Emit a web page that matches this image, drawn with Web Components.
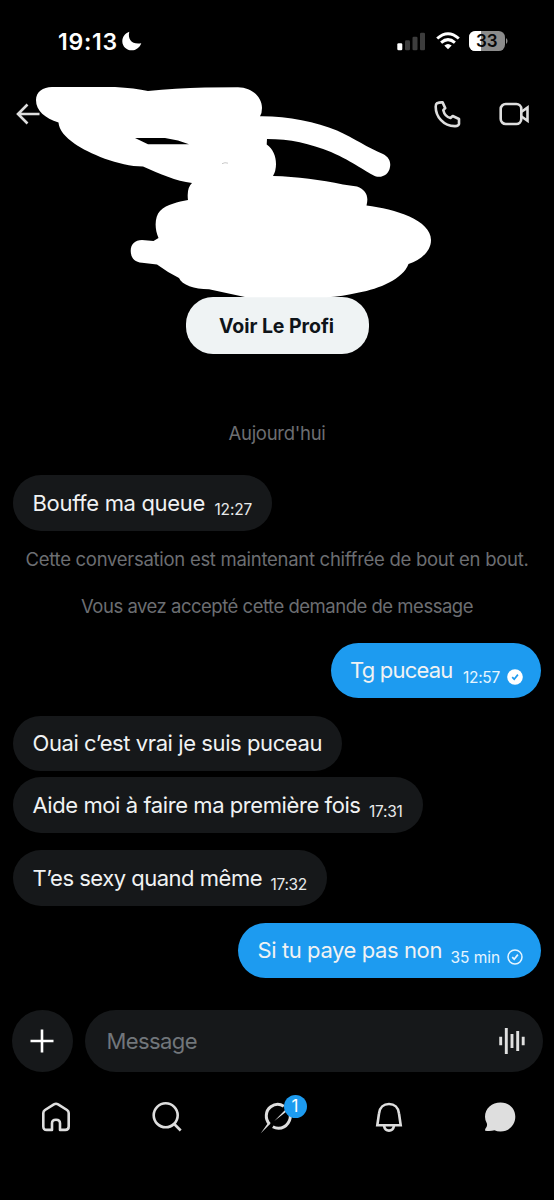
<!DOCTYPE html>
<html lang="fr">
<head>
<meta charset="utf-8">
<title>Conversation</title>
<style>
html,body{margin:0;background:#000;}
body{width:554px;height:1200px;overflow:hidden;font-family:Inter,Roboto,sans-serif;color:#f0f2f3}
</style>
</head>
<body>
<chat-app></chat-app>
<script>
const define=(name,html,after)=>{
  const t=document.createElement('template');t.innerHTML=html;
  customElements.define(name,class extends HTMLElement{
    connectedCallback(){
      if(this.shadowRoot)return;
      this.attachShadow({mode:'open'}).append(t.content.cloneNode(true));
      if(after)after(this,this.shadowRoot);
    }
  });
};

/* One line of text, tracked so that it fills the width given in pixels. */
define('fit-text',`<style>:host{display:block;white-space:pre;overflow:visible}span{display:inline-block}</style><span></span>`,(el,r)=>{
  const s=r.querySelector('span'),w=+el.getAttribute('width');
  s.textContent=el.getAttribute('text');
  el.style.width=w+'px';
  const n=s.getBoundingClientRect().width;
  s.style.letterSpacing=((w-n)/s.textContent.length)+'px';
});

define('status-bar',`<style>
:host{display:flex;height:80px;box-sizing:border-box;padding:0 45px 0 58px;justify-content:space-between;font-family:Inter,sans-serif}
div{display:flex;align-items:center;height:82px}
fit-text{font-size:23px;font-weight:600;color:#fff;padding-top:1px}
.moon{margin-left:4px}
.wifi{margin-left:9px}.bat{position:relative;margin-left:9px;width:40px;height:20px}
.bat b{position:absolute;left:7px;top:0;line-height:20px;font-size:17px;font-weight:600;color:#080808}
svg{display:block}
</style>
<div><fit-text text="19:13" width="60"></fit-text>
<svg class="moon" width="20" height="20" viewBox="0 0 20 20"><path fill="#fff" d="M7.300.700C5.300 8.500 10.500 14 19.300 12.200 17.300 17 13.900 19.300 9.800 19.300 4.500 19.300.300 15.400.300 10.200.300 5.900 3 2.300 7.300.700Z"/></svg></div>
<div>
<svg width="30" height="20" viewBox="0 0 30 20"><rect x=".300" y="12.300" width="5" height="7" rx="1.300" fill="#fff"/><g fill="#3d3d3d"><rect x="8" y="9.300" width="5" height="10" rx="1.300"/><rect x="15.500" y="5.800" width="5" height="13.500" rx="1.300"/><rect x="23" y="1.800" width="5" height="17.500" rx="1.300"/></g></svg>
<svg class="wifi" width="24" height="18" viewBox="0 0 24 18"><g fill="none" stroke="#fff" stroke-width="3"><path d="M1.200 6.500Q12-3.100 22.800 6.500"/><path d="M5.100 10.600Q12 4.600 18.900 10.600"/></g><path fill="#fff" d="M12 17.300 8.300 13.500Q12 10.400 15.700 13.500Z"/></svg>
<div class="bat"><svg width="40" height="20" viewBox="0 0 40 20"><defs><clipPath id="c"><rect width="36" height="20" rx="6.300"/></clipPath></defs><g clip-path="url(#c)"><rect width="36" height="20" fill="#8b8b8b"/><rect width="12" height="20" fill="#fff"/></g><path fill="#8b8b8b" d="M37 7q1.500 1.200 1.500 3t-1.500 3Z"/></svg><b>33</b></div>
</div>`);

define('chat-header',`<style>
:host{display:flex;height:68px;box-sizing:border-box;padding:0 24px 0 16px;align-items:center;justify-content:space-between}
div{display:flex;gap:38.500px;align-items:center}svg{display:block;fill:none;stroke:#dedede;stroke-width:2.600}
</style>
<svg width="26" height="22" viewBox="0 0 26 22"><path d="M11.500 1.500 2 11l9.500 9.500M2 11h21.500"/></svg>
<div>
<svg width="27" height="27" viewBox="0 0 27 27" stroke-linejoin="round"><path d="M3.100 2.200Q5.500 1.200 8.600 1.400L11.200 7.100 9.300 9.200Q10.800 15.500 16.500 17L18.700 15 25 18V23Q24.500 25.300 20.700 25.100C9.500 25.100 1.700 15.700 1.700 5.700Q1.700 3.100 3.100 2.200Z"/></svg>
<svg width="31" height="24" viewBox="0 0 31 24"><rect x="1.700" y="2" width="20.600" height="20" rx="5"/><path d="M22.500 9.800 28.500 5.600V18.700L22.500 14.500"/></svg>
</div>`);

/* White brush strokes that hide the account's name and picture. */
define('brush-mask',`<style>:host{position:absolute;left:0;top:0;width:554px;height:310px;pointer-events:none}svg{display:block}</style>
<svg width="554" height="310" viewBox="0 0 554 310"><path fill="#fff" fill-rule="evenodd" d="M36 100C36 92 43 87 52 87L115 87Q135 88 148 91Q175 88 205 87.500L238 87.300C252 87.500 262 97 262 108Q262 113 260 116.300C287 116 316 122 337 130.500C354 138 368 148 383 154C389 157 391 162 390 167C389 174 383 178 376 176.500C367 173 354 162 331 152C310 143.500 290 139 267 139L266.700 144.500C273 149 276 156 276 164Q276 171 273 176C297 176.500 321 180 343 184.500L357 186.500C366 190 369 196 366.500 205.500C395 209 431 220 431 240C431 252 420 260 408.500 264C403 279 379 289 359 292.500Q342 296.500 327 297.200H246Q228 293.500 209 289.300C194 289 182 285 179 278Q167 272 157 264.500L142 262.800C134 262 130.700 257 130.700 251C130.700 244 135 240 142 240L153.500 241 158.500 238C154 228 155 216 160 211C167 204 178 202 188 200Q186.500 188 192 183C176 181 160 174 143 166.500C119 166.500 88 153 75 144C65 137 59 130 58.500 122.500C45 118 36 111 36 100ZM135 138 148 144.200H189L178 140.500 165 138Z"/><path d="M222 163.700l3-1 3 .5" fill="none" stroke="#bbb" stroke-width=".8"/></svg>`);

define('profile-card',`<style>
:host{display:flex;height:206px;justify-content:center;align-items:flex-end}
button{all:unset;box-sizing:border-box;width:183px;height:57.500px;border-radius:27px;background:#eff3f4;display:flex;justify-content:center;align-items:center;color:#0f1419;font-size:19.500px;font-weight:650}
fit-text{padding-right:1px;padding-top:1px}
</style><button><fit-text text="Voir Le Profi" width="115"></fit-text></button>`);

define('system-line',`<style>:host{display:flex;justify-content:center;height:24px;line-height:24px;font-size:18.500px;color:#6c6e72}</style><slot></slot>`);

define('message-bubble',`<style>
:host{display:flex;box-sizing:border-box;width:fit-content;height:55.500px;align-items:center;border-radius:28px;background:#16181a;margin-left:13px;padding:0 20px 0 19.500px}
:host([mine]){background:#1d9bf0;margin:0 13px 0 auto;padding-right:18px}
.t{font-size:22px;line-height:28px}
.s{font-size:15.500px;line-height:20px;padding-top:14.500px;margin-left:9px;color:#e8eaeb}
:host([mine]) .s{color:#e5f5ff}
svg{display:block;margin:14px 0 0 7px}
</style>`,(el,r)=>{
  const a=k=>el.getAttribute(k);
  const add=(c,text,w)=>{const f=document.createElement('fit-text');f.className=c;f.setAttribute('text',text);f.setAttribute('width',w);r.append(f);return f};
  add('t',a('text'),a('width'));
  if(a('time')){const f=add('s',a('time'),a('time-width'));if(a('gap'))f.style.marginLeft=a('gap')+'px'}
  if(a('state')){
    const read=a('state')==='read',h=document.createElement('template');
    h.innerHTML='<svg width="16" height="16" viewBox="0 0 16 16"><circle cx="8" cy="8" r="'+(read?7.8:7)+'" fill="'+(read?'#fff':'none')+'" stroke="'+(read?'none':'#e5f5ff')+'" stroke-width="1.500"/><path d="M5.200 8.200 7.200 10.200 10.900 5.600" fill="none" stroke="'+(read?'#1d9bf0':'#e5f5ff')+'" stroke-width="1.700"/></svg>';
    r.append(h.content);
  }
});

define('message-list',`<style>
:host{display:flex;flex-direction:column;height:655.500px;box-sizing:border-box;padding-top:67px}
</style>
<system-line><fit-text text="Aujourd'hui" width="97"></fit-text></system-line>
<message-bubble style="margin-top:30px" text="Bouffe ma queue" width="172.500" time="12:27" time-width="37.500" gap="9.500"></message-bubble>
<system-line style="margin-top:16px"><fit-text text="Cette conversation est maintenant chiffrée de bout en bout." width="503"></fit-text></system-line>
<system-line style="margin-top:23px"><fit-text text="Vous avez accepté cette demande de message" width="392"></fit-text></system-line>
<message-bubble mine style="margin-top:25px" text="Tg puceau" width="102.500" time="12:57" time-width="37" gap="10.500" state="read"></message-bubble>
<message-bubble style="margin-top:17.500px" text="Ouai c’est vrai je suis puceau" width="289.500"></message-bubble>
<message-bubble style="margin-top:6px" text="Aide moi à faire ma première fois" width="328" time="17:31" time-width="33.500" gap="8.500"></message-bubble>
<message-bubble style="margin-top:17.500px" text="T’es sexy quand même" width="229.500" time="17:32" time-width="36.500" gap="8.500"></message-bubble>
<message-bubble mine style="margin-top:17px" text="Si tu paye pas non" width="184.500" time="35 min" time-width="49.500" gap="8.500" state="sent"></message-bubble>`);

define('message-composer',`<style>
:host{display:flex;height:62.500px;box-sizing:border-box;padding:0 11.500px 0 11.500px;gap:11.500px}
.plus{width:61.500px;flex:none;border-radius:50%;background:#16181a;display:grid;place-items:center}
.field{flex:1;border-radius:32px;background:#16181a;display:flex;align-items:center;justify-content:space-between;padding:0 17px 0 22px;color:#71767b;font-size:22px}
svg{display:block}
</style>
<div class="plus"><svg width="24" height="24" viewBox="0 0 24 24"><path d="M12 .5v23M.5 12h23" stroke="#fff" stroke-width="2.600"/></svg></div>
<div class="field"><fit-text text="Message" width="90.500"></fit-text>
<svg width="28" height="28" viewBox="0 0 28 28"><path d="M2.700 9.700v8.600M8.300 1v26M14 7v14M19.700 4v20M25.200 9.700v8.600" stroke="#e0e0e0" stroke-width="2.900"/></svg></div>`);

define('tab-bar',`<style>
:host{display:grid;grid-template-columns:repeat(5,111px);height:90px;width:555px}
div{height:90.500px;display:flex;align-items:center;justify-content:center;position:relative}
svg{display:block;fill:none;stroke:#dedede;stroke-width:2.600}
b{position:absolute;left:61.500px;top:22.500px;width:23px;height:23px;border-radius:50%;background:#1d9bf0;color:#fff;font-size:17px;font-weight:400;line-height:23px;text-align:center}
</style>
<div><svg width="30" height="30" viewBox="0 0 30 30"><path stroke-linejoin="round" d="M4 8 12.900 2.300Q15 1.200 17.100 2.300L26 8Q27.700 9.200 27.700 11V24.500Q27.700 27.900 24.300 27.900H19V21.200Q19 17.700 15 17.700T11 21.200V27.900H5.700Q2.300 27.900 2.300 24.500V11Q2.300 9.200 4 8Z"/></svg></div>
<div><svg width="30" height="30" viewBox="0 0 30 30"><circle cx="13.700" cy="13.300" r="12"/><path d="m22.200 22 6.500 6.500"/></svg></div>
<div><svg width="36" height="36" viewBox="0 0 36 36"><path stroke-width="3" d="M9.500 25C4.800 20 5.300 11.800 10.800 7.800C15 4.700 20 4.800 23.800 7.300M29.600 13C32.300 21 26.500 29.200 18.500 29.200Q15.500 29.200 12.800 27.700"/><path fill="#dedede" stroke="none" d="M.800 34.300 7.800 24.200 10.600 24.600ZM14.300 22 24.500 11.600 27.500 11.800Z"/></svg><b>1</b></div>
<div><svg width="28" height="30" viewBox="0 0 28 30"><path stroke-width="2.600" d="M2.300 23.300 4 11.500C4.700 5.500 8.700 2 14 2S23.300 5.500 24 11.500L25.700 23.300ZM9 24Q10 28.600 14 28.600T19 24"/></svg></div>
<div><svg width="32" height="32" viewBox="0 0 32 32"><path fill="#dedede" stroke="none" d="M16.500 1.500C25 1.500 31.300 7.500 31.300 15.700S25 30.500 16.500 30.500Q13 30.500 10.500 29.200Q6.500 30.500 1.200 29.700Q.7 28 2.200 26.500Q3.400 24.800 2.900 22.600Q1 19.500 1 15.700C1 7.500 8 1.500 16.500 1.500Z"/></svg></div>`);

define('chat-app',`<style>:host{display:flex;flex-direction:column;width:554px;height:1200px;background:#000;position:relative;overflow:hidden}</style>
<status-bar></status-bar><chat-header></chat-header><profile-card></profile-card><message-list></message-list><message-composer></message-composer><tab-bar></tab-bar><brush-mask></brush-mask>`);
</script>
</body>
</html>
